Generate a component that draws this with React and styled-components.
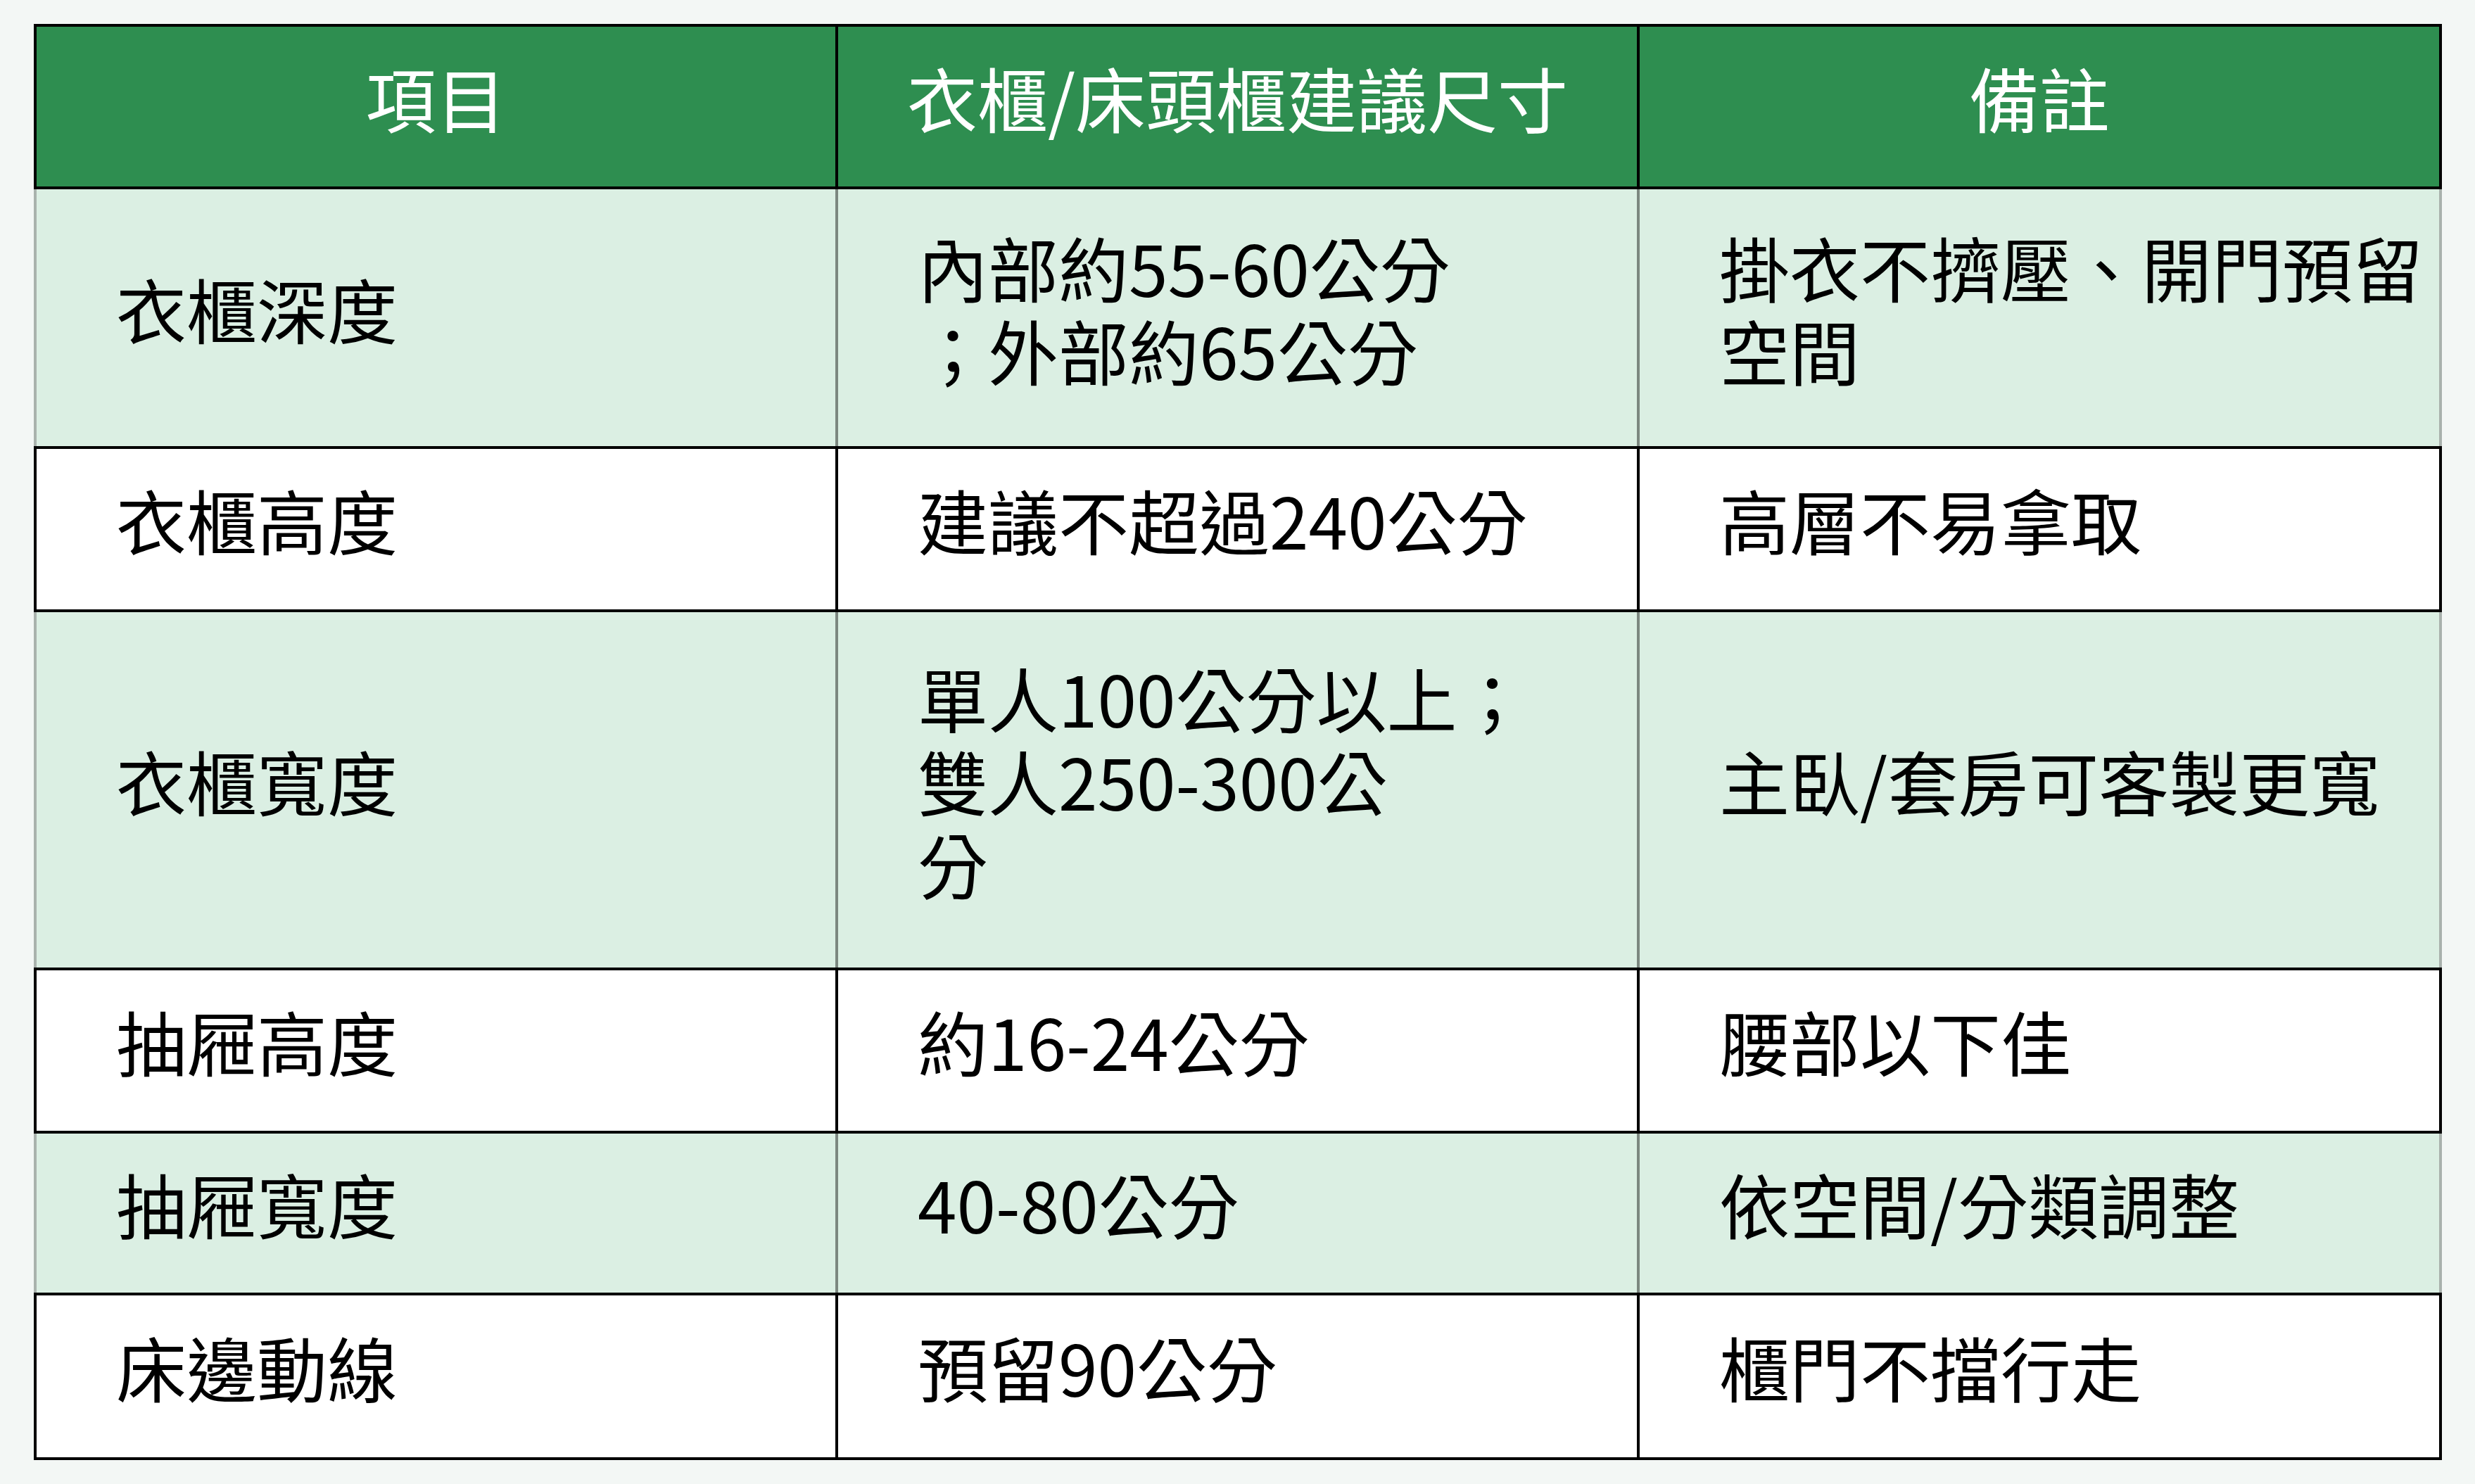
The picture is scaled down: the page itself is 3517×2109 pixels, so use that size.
import React from 'react';
import styled, { createGlobalStyle } from 'styled-components';

const GlobalStyle = createGlobalStyle`
  body {
    margin: 0;
    background: #f3f7f5;
    font-family: "Noto Sans CJK TC", "Noto Sans", sans-serif;
  }
`;

const rows = [
  {
    tone: 'tint',
    height: 369,
    item: '衣櫃深度',
    size: <>內部約55-60公分<br />；外部約65公分</>,
    note: <>掛衣不擠壓、開門預留<br />空間</>,
  },
  { tone: 'plain', height: 232, item: '衣櫃高度', size: '建議不超過240公分', note: '高層不易拿取' },
  {
    tone: 'tint',
    height: 509,
    item: '衣櫃寬度',
    size: <>單人100公分以上；<br />雙人250-300公<br />分</>,
    note: '主臥/套房可客製更寬',
  },
  { tone: 'plain', height: 232, item: '抽屜高度', size: '約16-24公分', note: '腰部以下佳' },
  { tone: 'tint', height: 230, item: '抽屜寬度', size: '40-80公分', note: '依空間/分類調整' },
  { tone: 'plain', height: 238, item: '床邊動線', size: '預留90公分', note: '櫃門不擋行走', last: true },
];

const tones = {
  head: { bg: '#2e8e50', inner: '#000', outer: '#000', color: '#fff' },
  tint: { bg: '#dbefe3', inner: '#7c8780', outer: '#a9b2ad', color: '#000' },
  plain: { bg: '#fff', inner: '#000', outer: '#000', color: '#000' },
};

const App = () => (
  <Page>
    <GlobalStyle />
    <Table>
      <Row $tone="head" $height={231}>
        <HeadCell $tone="head">項目</HeadCell>
        <HeadCell $tone="head">衣櫃/床頭櫃建議尺寸</HeadCell>
        <HeadCell $tone="head">備註</HeadCell>
      </Row>
      {rows.map((r) => (
        <Row key={r.item} $tone={r.tone} $height={r.height} $last={r.last}>
          <Cell $tone={r.tone}><Text>{r.item}</Text></Cell>
          <Cell $tone={r.tone}><Text>{r.size}</Text></Cell>
          <Cell $tone={r.tone}><Text>{r.note}</Text></Cell>
        </Row>
      ))}
    </Table>
  </Page>
);

export default App;

const Page = styled.div`
  padding: 34px 0 0 48px;
`;

const Table = styled.div`
  width: 3422px;
  display: flex;
  flex-direction: column;
`;

const Row = styled.div`
  display: grid;
  grid-template-columns: 1139px 1139px 1144px;
  box-sizing: border-box;
  height: ${(p) => p.$height}px;
  border-top: 4px solid #000;
  border-bottom: ${(p) => (p.$last ? '4px solid #000' : 'none')};
  background: ${(p) => tones[p.$tone].bg};
`;

const Cell = styled.div`
  box-sizing: border-box;
  display: flex;
  align-items: center;
  padding: 0 0 28px 113px;
  border-left: 4px solid ${(p) => tones[p.$tone].inner};
  color: ${(p) => tones[p.$tone].color};
  font-size: 100px;
  line-height: 118px;
  white-space: nowrap;

  &:first-child {
    border-left-color: ${(p) => tones[p.$tone].outer};
  }
  &:last-child {
    border-right: 4px solid ${(p) => tones[p.$tone].outer};
  }
`;

const HeadCell = styled(Cell)`
  justify-content: center;
  padding: 0 0 28px 0;
`;

const Text = styled.div``;
